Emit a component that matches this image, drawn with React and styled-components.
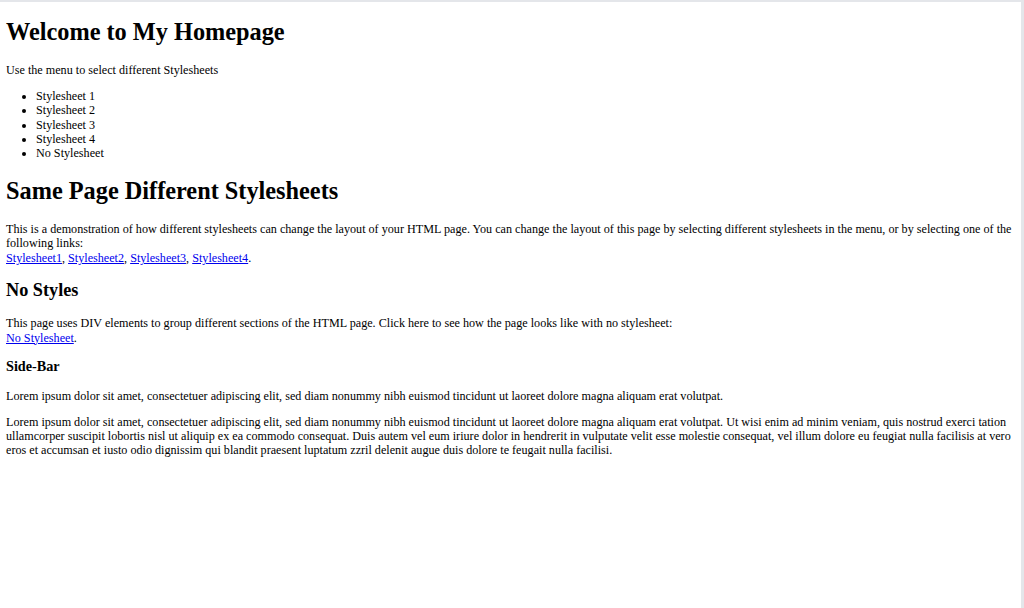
import React from 'react';
import styled, { createGlobalStyle } from 'styled-components';

const GlobalStyle = createGlobalStyle`
  html, body {
    margin: 0;
    padding: 0;
    background: #e4e6ea;
  }
`;

const Frame = styled.div`
  box-sizing: border-box;
  height: 606px;
  margin-top: 2px;
  margin-right: 3px;
  background: #fff;
  overflow: hidden;
`;

const Page = styled.div`
  padding: 0.05px 6px;
  font-family: 'Liberation Serif', 'Times New Roman', serif;
  font-size: 12.15px;
  line-height: 1.19;
  color: #000;
`;

const Title = styled.h1`
  font-size: 2em;
  font-weight: bold;
  margin: 0.66em 0;
`;

const Heading = styled.h2`
  font-size: 1.5em;
  font-weight: bold;
  margin: 0.8em 0;
`;

const SubHeading = styled.h3`
  font-size: 1.17em;
  font-weight: bold;
  margin: 0.95em 0;
`;

const Text = styled.p`
  margin: 0.92em 0;
`;

const Menu = styled.ul`
  margin: 0.92em 0;
  padding-left: 30px;
  list-style: disc;
`;

const MenuItem = styled.li``;

const TextLink = styled.a`
  color: #0000ee;
  text-decoration: underline;
`;

const sheets = ['Stylesheet1', 'Stylesheet2', 'Stylesheet3', 'Stylesheet4'];

const lorem =
  'Lorem ipsum dolor sit amet, consectetuer adipiscing elit, sed diam nonummy nibh euismod tincidunt ut laoreet dolore magna aliquam erat volutpat.';

export default function App() {
  return (
    <>
      <GlobalStyle />
      <Frame>
        <Page>
          <Title>Welcome to My Homepage</Title>
          <Text>Use the menu to select different Stylesheets</Text>
          <Menu>
            <MenuItem>Stylesheet 1</MenuItem>
            <MenuItem>Stylesheet 2</MenuItem>
            <MenuItem>Stylesheet 3</MenuItem>
            <MenuItem>Stylesheet 4</MenuItem>
            <MenuItem>No Stylesheet</MenuItem>
          </Menu>

          <Title>Same Page Different Stylesheets</Title>
          <Text>
            This is a demonstration of how different stylesheets can change the layout of your HTML
            page. You can change the layout of this page by selecting different stylesheets in the
            menu, or by selecting one of the following links:
            <br />
            {sheets.map((name, i) => (
              <React.Fragment key={name}>
                <TextLink href="#">{name}</TextLink>
                {i < sheets.length - 1 ? ', ' : '.'}
              </React.Fragment>
            ))}
          </Text>

          <Heading>No Styles</Heading>
          <Text>
            This page uses DIV elements to group different sections of the HTML page. Click here to
            see how the page looks like with no stylesheet:
            <br />
            <TextLink href="#">No Stylesheet</TextLink>.
          </Text>

          <SubHeading>Side-Bar</SubHeading>
          <Text>{lorem}</Text>
          <Text>
            {lorem} Ut wisi enim ad minim veniam, quis nostrud exerci tation ullamcorper suscipit
            lobortis nisl ut aliquip ex ea commodo consequat. Duis autem vel eum iriure dolor in
            hendrerit in vulputate velit esse molestie consequat, vel illum dolore eu feugiat nulla
            facilisis at vero eros et accumsan et iusto odio dignissim qui blandit praesent luptatum
            zzril delenit augue duis dolore te feugait nulla facilisi.
          </Text>
        </Page>
      </Frame>
    </>
  );
}
